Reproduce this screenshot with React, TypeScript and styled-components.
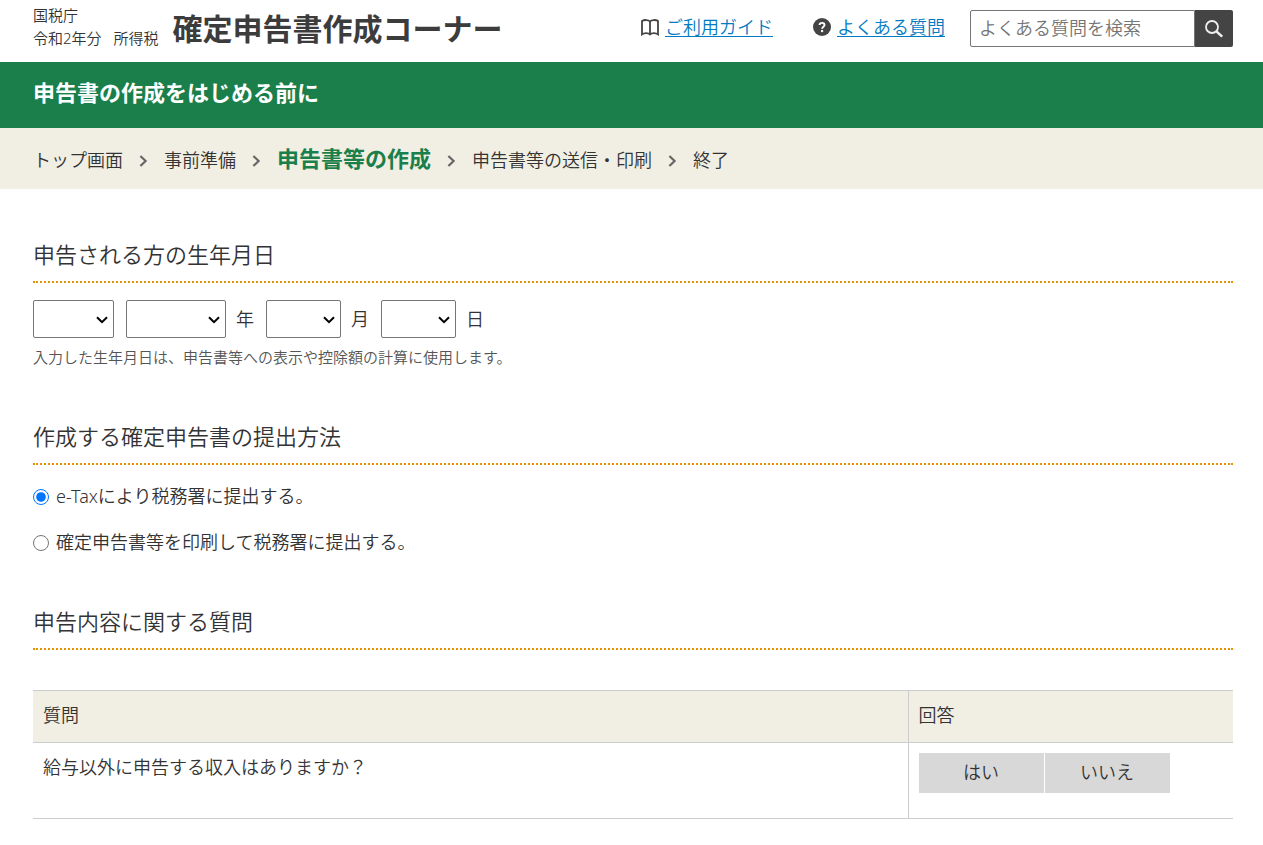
import { useState } from "react";
import styled, { createGlobalStyle } from "styled-components";

const color = {
  text: "#333333",
  green: "#1a7f4b",
  beige: "#f1eee3",
  orange: "#e69100",
  line: "#cccccc",
  link: "#007ac3",
  dark: "#444444",
  field: "#767676",
};

const GlobalStyle = createGlobalStyle`
  *, *::before, *::after { box-sizing: border-box; }
  body {
    margin: 0;
    background: #ffffff;
    color: ${color.text};
    font-family: "Noto Sans", "Noto Sans CJK JP", sans-serif;
    font-size: 18px;
    font-weight: 350;
    line-height: 28px;
  }
  button, input, select { font: inherit; color: inherit; }
`;

const Header = styled.header`
  display: flex;
  justify-content: space-between;
  align-items: flex-start;
  min-height: 62px;
  padding: 4px 30px 8px 33px;
`;

const Brand = styled.div`
  display: flex;
  align-items: flex-start;
  gap: 14px;
  white-space: nowrap;
`;

const Office = styled.p`
  margin: 0;
  font-size: 15px;
  line-height: 23px;
`;

const TaxKind = styled.span`
  margin-left: 12px;
`;

const SiteTitle = styled.h1`
  margin: 0;
  font-size: 30px;
  font-weight: 700;
  line-height: 50px;
  color: #3c3c3c;
`;

const Tools = styled.div`
  display: flex;
  align-items: flex-start;
  gap: 25px;
  padding-top: 6px;
  white-space: nowrap;
`;

const HelpNav = styled.nav`
  display: flex;
  gap: 40px;
  padding-top: 3px;
`;

const HelpItem = styled.span`
  display: flex;
  align-items: center;
  gap: 6px;
  color: ${color.dark};

  a {
    color: ${color.link};
    text-underline-offset: 2px;
  }
`;

const SearchForm = styled.form`
  display: flex;
`;

const SearchInput = styled.input`
  width: 225px;
  height: 37px;
  padding: 0 8px 2px;
  border: 1px solid ${color.field};
  border-radius: 2px 0 0 2px;
  background: #ffffff;

  &::placeholder { color: #757575; opacity: 1; }
`;

const SearchButton = styled.button`
  display: flex;
  align-items: center;
  justify-content: center;
  width: 38px;
  height: 37px;
  padding: 0;
  border: 0;
  border-radius: 0 2px 2px 0;
  background: ${color.dark};
  color: #eeeeee;
`;

const Banner = styled.div`
  padding: 12px 30px 18px 33px;
  background: ${color.green};
  color: #ffffff;
  font-size: 22px;
  font-weight: 700;
  line-height: 36px;
`;

const Steps = styled.ol`
  display: flex;
  align-items: baseline;
  gap: 16px;
  margin: 0;
  padding: 14px 30px 13px 33px;
  background: ${color.beige};
  list-style: none;
  line-height: 32px;
  white-space: nowrap;
`;

const Step = styled.li<{ $current?: boolean }>`
  display: flex;
  align-items: baseline;
  gap: 16px;
  font-size: ${(p) => (p.$current ? "22px" : "18px")};
  font-weight: ${(p) => (p.$current ? 700 : 350)};
  color: ${(p) => (p.$current ? color.green : color.text)};
`;

const Main = styled.main`
  padding: 47px 30px 26px 33px;
`;

const Section = styled.section`
  & + & { margin-top: 47px; }
`;

const SectionTitle = styled.h2`
  margin: 0;
  padding-bottom: 9px;
  border-bottom: 2px dotted ${color.orange};
  font-size: 22px;
  font-weight: 350;
  line-height: 36px;
`;

const DateFields = styled.div`
  display: flex;
  align-items: center;
  gap: 12px;
  padding-top: 17px;
`;

const SelectBox = styled.span<{ $width: number }>`
  position: relative;
  display: flex;
  width: ${(p) => p.$width}px;
  height: 38px;

  select {
    width: 100%;
    padding: 0 24px 0 8px;
    appearance: none;
    border: 1px solid ${color.field};
    border-radius: 2px;
    background: #ffffff;
    color: #000000;
  }
  svg {
    position: absolute;
    right: 6px;
    top: 16px;
    pointer-events: none;
  }
`;

const DateUnit = styled.label`
  display: flex;
  align-items: center;
  gap: 10px;
`;

const Note = styled.p`
  margin: 7px 0 0;
  padding-bottom: 2px;
  color: #555555;
  font-size: 15px;
  line-height: 24px;
`;

const Choices = styled.fieldset`
  display: flex;
  flex-direction: column;
  gap: 18px;
  margin: 0;
  padding: 17px 0 0;
  border: 0;
`;

const Choice = styled.label`
  display: flex;
  align-items: center;
  gap: 7px;

  input {
    width: 16px;
    height: 16px;
    margin: 2px 0 0;
    accent-color: #0075ff;
  }
`;

const QuestionTable = styled.table`
  width: 100%;
  margin-top: 40px;
  border-collapse: collapse;
  table-layout: fixed;

  th, td {
    padding: 10px;
    border-top: 1px solid ${color.line};
    border-bottom: 1px solid ${color.line};
    text-align: left;
    vertical-align: top;
    font-weight: 350;
  }
  th {
    padding-bottom: 13px;
    background: ${color.beige};
  }
  td { padding-bottom: 25px; }
  th + th, td + td {
    width: 325px;
    border-left: 1px solid ${color.line};
  }
`;

const Answers = styled.div`
  display: flex;
  gap: 1px;
`;

const AnswerButton = styled.button`
  width: 125px;
  height: 40px;
  padding: 0 0 2px;
  border: 0;
  background: #d8d8d8;
`;

const BookIcon = () => (
  <svg width="18" height="18" viewBox="0 0 18 18" fill="none" stroke="currentColor" strokeWidth="1.8" aria-hidden="true">
    <path d="M9 3.6C7.6 1.6 3 1.6 1 3V16.4C3 14.6 7.4 14.6 9 16.4C10.6 14.6 15 14.6 17 16.4V3C15 1.6 10.4 1.6 9 3.6Z" />
    <path d="M9 3.4V16.6" />
  </svg>
);

const QuestionIcon = () => (
  <svg width="18" height="18" viewBox="0 0 18 18" fill="none" aria-hidden="true">
    <circle cx="9" cy="9" r="9" fill="currentColor" />
    <path d="M6.6 7C6.6 4.2 11.5 4.2 11.5 6.9C11.5 8.7 9.1 8.6 9.1 10.8" stroke="#ffffff" strokeWidth="1.9" />
    <circle cx="9.1" cy="13" r="1.2" fill="#ffffff" />
  </svg>
);

const SearchIcon = () => (
  <svg width="20" height="20" viewBox="0 0 20 20" fill="none" stroke="currentColor" aria-hidden="true">
    <circle cx="8" cy="8" r="6" strokeWidth="1.8" />
    <path d="M12.4 12.4L18.2 17.6" strokeWidth="2.6" />
  </svg>
);

const Chevron = () => (
  <svg width="9" height="12" viewBox="0 0 9 12" fill="none" stroke="#666666" strokeWidth="2.2" aria-hidden="true">
    <path d="M1.4 1L6.6 6L1.4 11" />
  </svg>
);

const DownArrow = () => (
  <svg width="12" height="8" viewBox="0 0 12 8" fill="none" stroke="#000000" strokeWidth="2" aria-hidden="true">
    <path d="M1 1.2L6 6.2L11 1.2" />
  </svg>
);

const DateSelect = ({ width, label }: { width: number; label?: string }) => (
  <SelectBox $width={width}>
    <select aria-label={label} />
    <DownArrow />
  </SelectBox>
);

const steps = ["トップ画面", "事前準備", "申告書等の作成", "申告書等の送信・印刷", "終了"];
const currentStep = 2;

export default function App() {
  const [method, setMethod] = useState("etax");

  return (
    <>
      <GlobalStyle />
      <Header>
        <Brand>
          <Office>
            国税庁
            <br />
            令和2年分<TaxKind>所得税</TaxKind>
          </Office>
          <SiteTitle>確定申告書作成コーナー</SiteTitle>
        </Brand>
        <Tools>
          <HelpNav>
            <HelpItem>
              <BookIcon />
              <a href="#guide">ご利用ガイド</a>
            </HelpItem>
            <HelpItem>
              <QuestionIcon />
              <a href="#faq">よくある質問</a>
            </HelpItem>
          </HelpNav>
          <SearchForm role="search" onSubmit={(e) => e.preventDefault()}>
            <SearchInput type="text" aria-label="よくある質問を検索" placeholder="よくある質問を検索" />
            <SearchButton type="submit" aria-label="検索">
              <SearchIcon />
            </SearchButton>
          </SearchForm>
        </Tools>
      </Header>

      <Banner>申告書の作成をはじめる前に</Banner>

      <Steps>
        {steps.map((name, i) => (
          <Step key={name} $current={i === currentStep} aria-current={i === currentStep ? "step" : undefined}>
            {name}
            {i < steps.length - 1 && <Chevron />}
          </Step>
        ))}
      </Steps>

      <Main>
        <Section>
          <SectionTitle>申告される方の生年月日</SectionTitle>
          <DateFields>
            <DateSelect width={81} label="元号" />
            <DateUnit>
              <DateSelect width={100} />年
            </DateUnit>
            <DateUnit>
              <DateSelect width={75} />月
            </DateUnit>
            <DateUnit>
              <DateSelect width={75} />日
            </DateUnit>
          </DateFields>
          <Note>入力した生年月日は、申告書等への表示や控除額の計算に使用します。</Note>
        </Section>

        <Section>
          <SectionTitle>作成する確定申告書の提出方法</SectionTitle>
          <Choices aria-label="提出方法">
            <Choice>
              <input type="radio" name="method" checked={method === "etax"} onChange={() => setMethod("etax")} />
              e-Taxにより税務署に提出する。
            </Choice>
            <Choice>
              <input type="radio" name="method" checked={method === "print"} onChange={() => setMethod("print")} />
              確定申告書等を印刷して税務署に提出する。
            </Choice>
          </Choices>
        </Section>

        <Section>
          <SectionTitle>申告内容に関する質問</SectionTitle>
          <QuestionTable>
            <thead>
              <tr>
                <th scope="col">質問</th>
                <th scope="col">回答</th>
              </tr>
            </thead>
            <tbody>
              <tr>
                <td>給与以外に申告する収入はありますか？</td>
                <td>
                  <Answers>
                    <AnswerButton type="button">はい</AnswerButton>
                    <AnswerButton type="button">いいえ</AnswerButton>
                  </Answers>
                </td>
              </tr>
            </tbody>
          </QuestionTable>
        </Section>
      </Main>
    </>
  );
}
